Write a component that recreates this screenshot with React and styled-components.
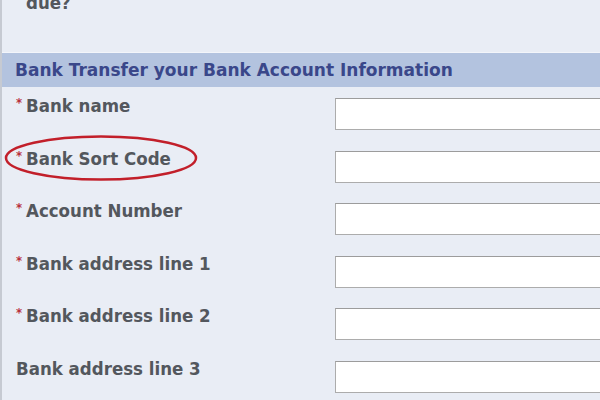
import React from "react";
import styled, { createGlobalStyle } from "styled-components";

const GlobalStyle = createGlobalStyle`
  html, body {
    margin: 0;
    padding: 0;
    background: #e9edf5;
  }
`;

const Page = styled.div`
  width: 600px;
  height: 400px;
  overflow: hidden;
  box-sizing: border-box;
  background: #e9edf5;
  border-left: 2px solid #c6cad2;
  font-family: "DejaVu Sans", Verdana, sans-serif;
  font-weight: bold;
`;

const Question = styled.div`
  height: 61px;
  padding-left: 24px;
  margin-top: -8px;
  font-family: "DejaVu Sans Condensed", "DejaVu Sans", sans-serif;
  font-size: 18.5px;
  line-height: 22px;
  color: #53575d;
  box-sizing: border-box;
  border-bottom: 1px solid #f3f5fa;
`;

const Header = styled.div`
  height: 34px;
  display: flex;
  align-items: center;
  padding-left: 13px;
  background: #b3c3df;
  color: #3a478a;
  font-size: 17px;
  white-space: nowrap;
`;

const Rows = styled.div`
  padding-top: 8px;
`;

const Row = styled.div`
  height: 52.5px;
  display: grid;
  grid-template-columns: 333px 1fr;
  align-items: start;
`;

const Label = styled.div`
  position: relative;
  display: flex;
  align-items: flex-start;
  padding-left: 14px;
  font-family: "DejaVu Sans Condensed", "DejaVu Sans", sans-serif;
  font-size: 18.5px;
  line-height: 22px;
  color: #53575d;
  white-space: nowrap;
`;

const Star = styled.span`
  color: #b8323c;
  font-size: 13px;
  line-height: 13px;
  width: 10px;
  margin-top: 1px;
`;

const Input = styled.input`
  margin: 3px 0 0 0;
  height: 32px;
  width: 300px;
  box-sizing: border-box;
  background: #fff;
  border: 1px solid #acacac;
  border-top-color: #9c9c9c;
  padding: 0 4px;
  outline: none;
`;

const Circle = styled.svg`
  position: absolute;
  left: 2px;
  top: -13px;
  overflow: visible;
  pointer-events: none;
`;

const fields = [
  { label: "Bank name", required: true },
  { label: "Bank Sort Code", required: true, circled: true },
  { label: "Account Number", required: true },
  { label: "Bank address line 1", required: true },
  { label: "Bank address line 2", required: true },
  { label: "Bank address line 3", required: false },
];

export default function App() {
  return (
    <Page>
      <GlobalStyle />
      <Question>due?</Question>
      <Header>Bank Transfer your Bank Account Information</Header>
      <Rows>
        {fields.map((f) => (
          <Row key={f.label}>
            <Label>
              {f.required ? <Star>*</Star> : null}
              {f.label}
              {f.circled ? (
                <Circle width="196" height="48" viewBox="0 0 196 48">
                  <ellipse cx="97" cy="23" rx="95" ry="21.5" fill="none" stroke="#c21f2a" strokeWidth="2.5" />
                </Circle>
              ) : null}
            </Label>
            <Input type="text" />
          </Row>
        ))}
      </Rows>
    </Page>
  );
}
